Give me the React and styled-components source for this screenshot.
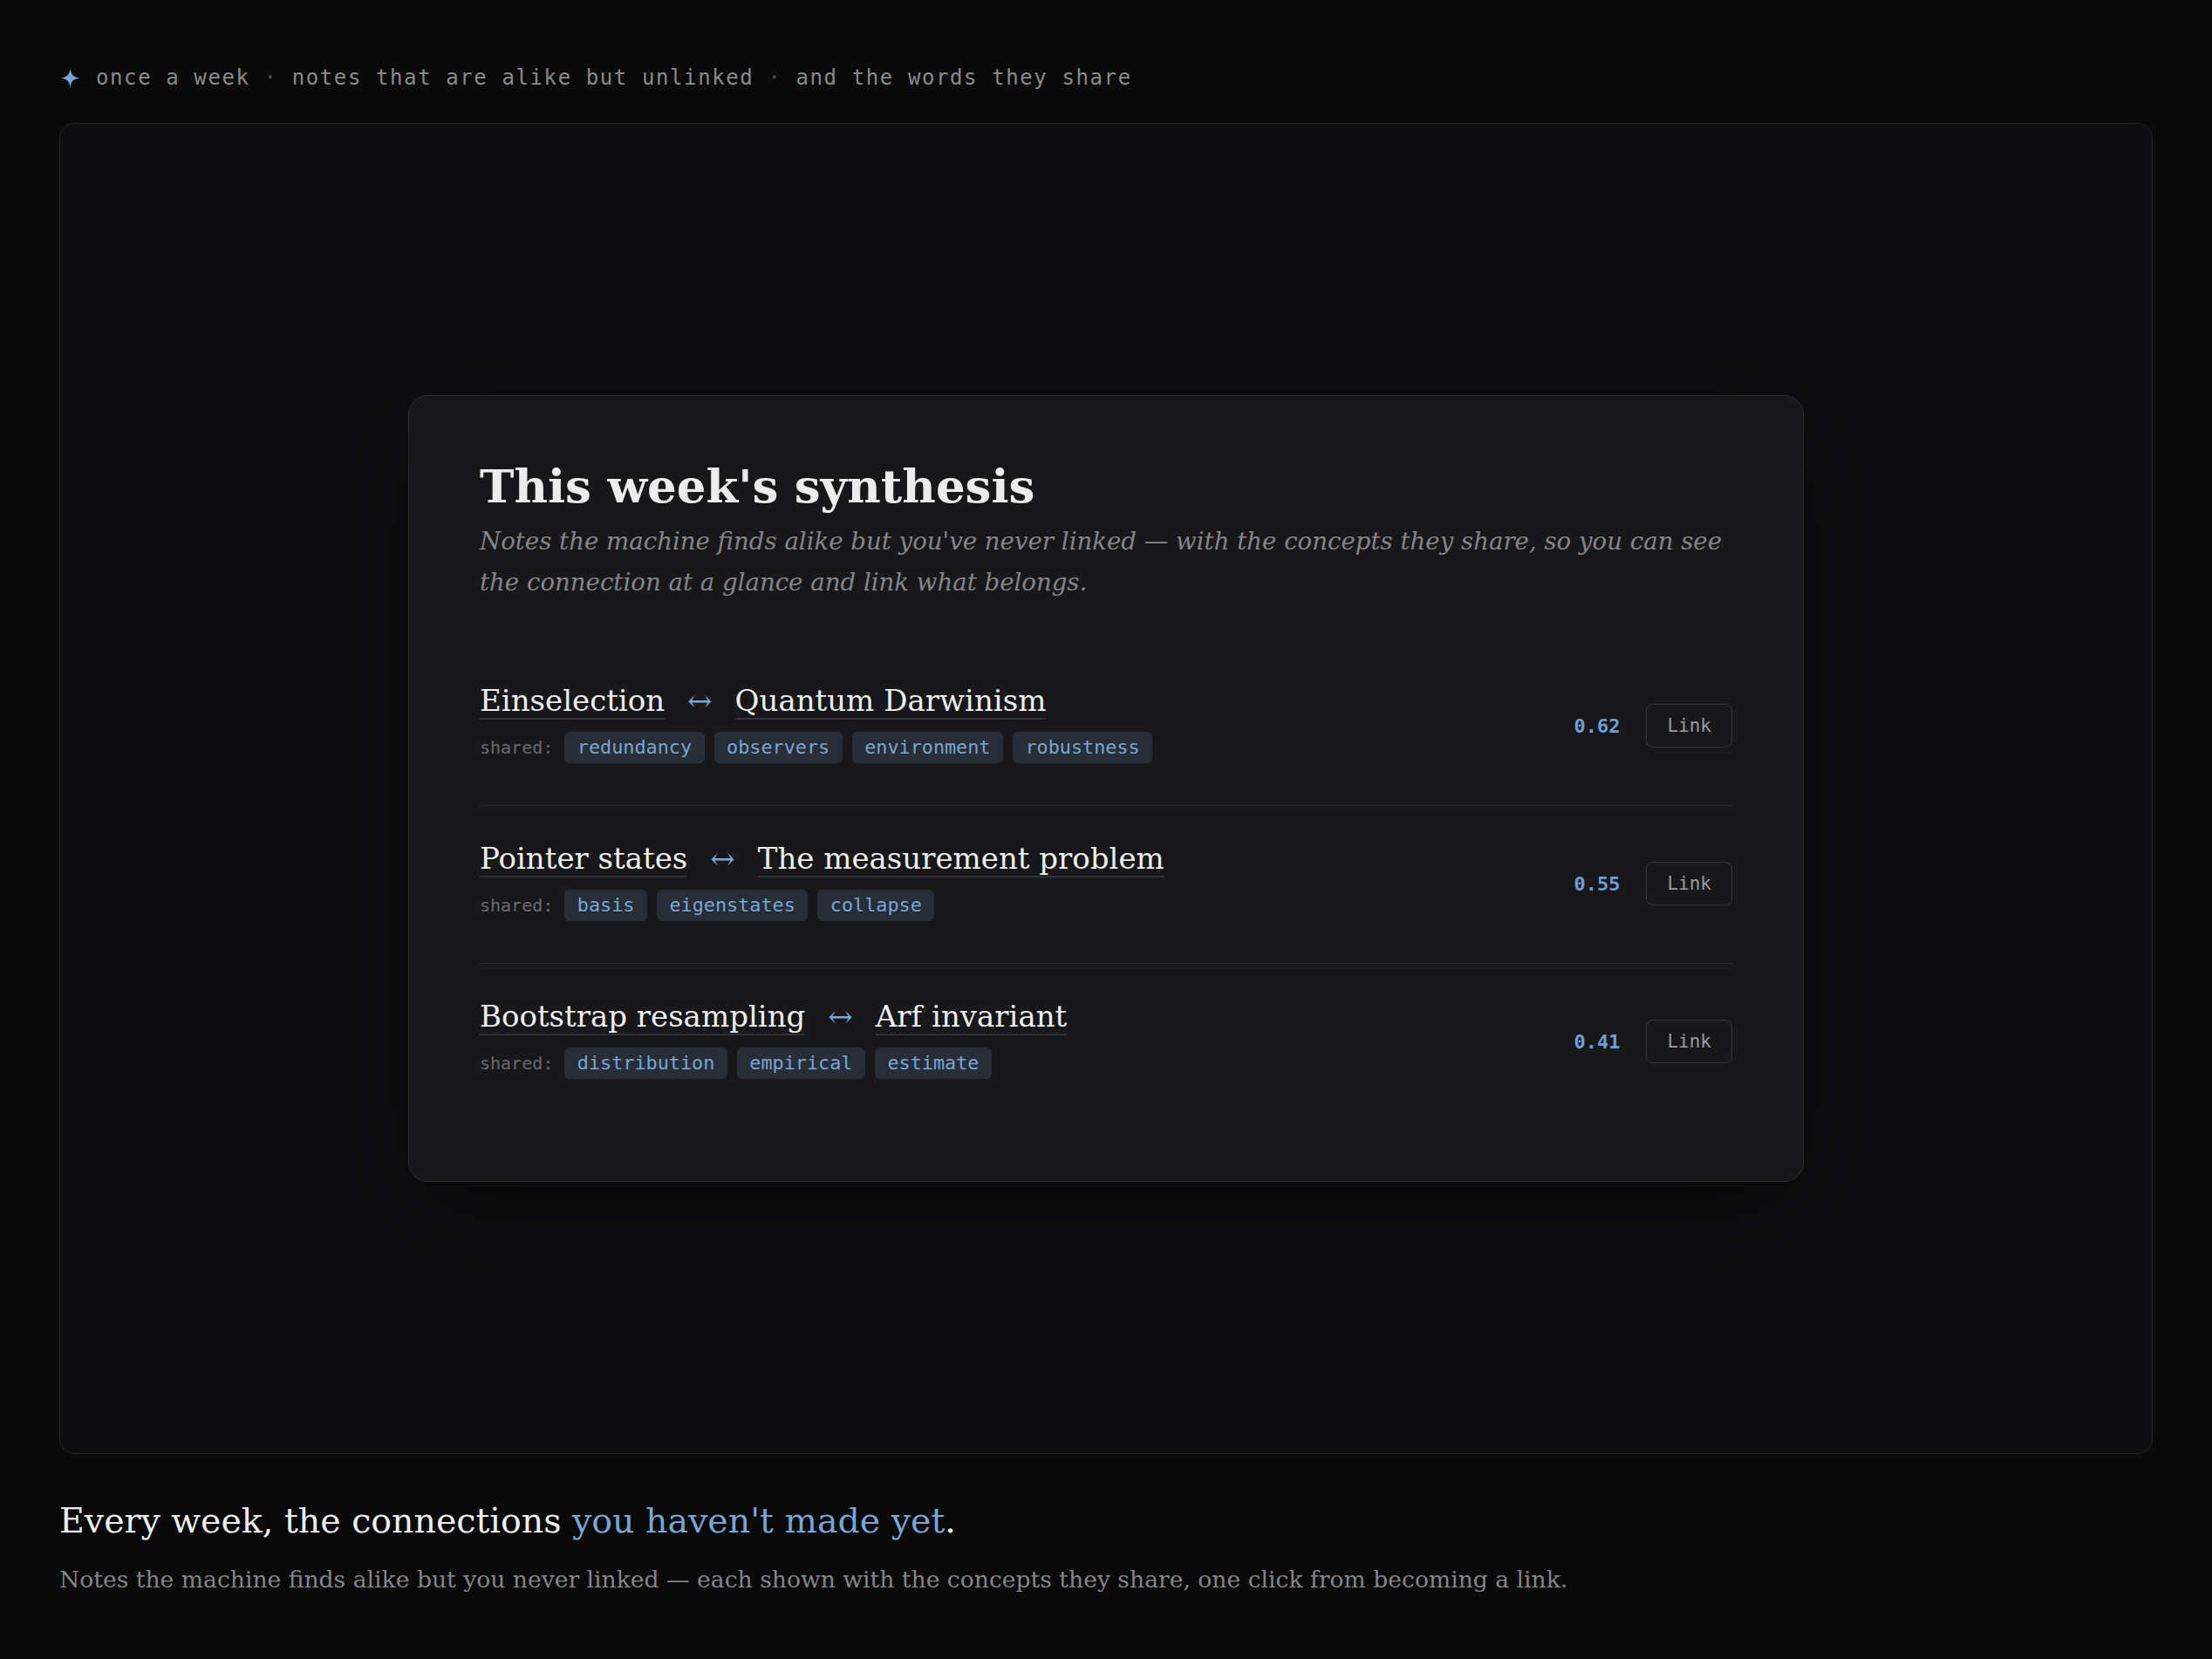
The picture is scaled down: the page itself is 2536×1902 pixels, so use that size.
import React from "react";
import styled, { createGlobalStyle } from "styled-components";

const serif = `"DejaVu Serif", Georgia, serif`;
const mono = `"DejaVu Sans Mono", Menlo, monospace`;
const accent = "#7aa5d3";

const GlobalStyle = createGlobalStyle`
  html, body {
    margin: 0;
    background: #0a0a0b;
  }
  body {
    color: #e6e6e6;
    font-family: ${serif};
  }
`;

const Page = styled.main`
  padding: 73px 68px 80px;
`;

const Caption = styled.div`
  display: flex;
  align-items: center;
  font-family: ${mono};
  font-size: 24px;
  line-height: 32px;
  letter-spacing: 1.6px;
  color: #8a8a8a;
`;

const Sparkle = styled.svg`
  width: 25px;
  height: 25px;
  margin: 0 17px 0 0;
  flex: none;
`;

const Dot = styled.span`
  color: #4e4e52;
`;

const Stage = styled.section`
  box-sizing: border-box;
  height: 1526px;
  margin-top: 36px;
  border: 1.5px solid #26262a;
  border-radius: 17px;
  background: #0f0f11;
  display: flex;
  align-items: center;
  justify-content: center;
`;

const Card = styled.article`
  box-sizing: border-box;
  width: 1600px;
  padding: 71px 81px 69px;
  border: 1.5px solid #2c2c30;
  border-radius: 22px;
  background: #18181a;
  box-shadow: 0 30px 120px rgba(0, 0, 0, 0.5);
`;

const Title = styled.h1`
  margin: 0;
  font-family: ${serif};
  font-weight: 700;
  font-size: 53px;
  line-height: 64px;
  color: #ececec;
`;

const Lede = styled.p`
  margin: 8px 0 0;
  font-family: ${serif};
  font-style: italic;
  font-size: 27.6px;
  line-height: 47px;
  color: #858589;
`;

const Pairs = styled.ul`
  list-style: none;
  margin: 52px 0 0;
  padding: 0;
`;

const Pair = styled.li`
  display: flex;
  align-items: center;
  padding: 36px 0 48px;
  border-bottom: 1px solid #29292d;

  &:last-child {
    border-bottom: none;
  }
`;

const PairBody = styled.div`
  flex: 1;
  display: flex;
  flex-direction: column;
  gap: 12px;
`;

const PairTitle = styled.div`
  font-family: ${serif};
  font-size: 34px;
  line-height: 48px;
  color: #eeeeee;
`;

const Note = styled.span`
  border-bottom: 2px solid #2f323a;
`;

const Arrow = styled.span`
  margin: 0 26px;
  color: ${accent};
`;

const Shared = styled.div`
  display: flex;
  align-items: center;
  gap: 11px;
`;

const SharedLabel = styled.span`
  font-family: ${mono};
  font-size: 20px;
  color: #6a6a6e;
  margin-right: 2px;
`;

const Chip = styled.span`
  font-family: ${mono};
  font-size: 21.8px;
  line-height: 28px;
  padding: 4px 14.5px;
  border-radius: 6px;
  background: #282e37;
  color: ${accent};
`;

const Actions = styled.div`
  display: flex;
  align-items: center;
  gap: 30px;
  margin-top: 10px;
`;

const Score = styled.span`
  font-family: ${mono};
  font-size: 22px;
  font-weight: 600;
  color: #6f9fd2;
`;

const LinkButton = styled.button`
  font-family: ${mono};
  font-size: 21px;
  line-height: 24px;
  padding: 12px 23px;
  border: 1.5px solid #35353a;
  border-radius: 8px;
  background: transparent;
  color: #9a9a9e;
  cursor: pointer;
`;

const Footer = styled.footer`
  margin-top: 50px;
`;

const Tagline = styled.h2`
  margin: 0;
  font-family: ${serif};
  font-weight: 400;
  font-size: 39.5px;
  line-height: 52px;
  color: #eeeeee;
`;

const Highlight = styled.span`
  color: ${accent};
`;

const Blurb = styled.p`
  margin: 22px 0 0;
  font-family: ${serif};
  font-size: 26.6px;
  line-height: 40px;
  color: #858589;
`;

const pairs = [
  { a: "Einselection", b: "Quantum Darwinism", shared: ["redundancy", "observers", "environment", "robustness"], score: 0.62 },
  { a: "Pointer states", b: "The measurement problem", shared: ["basis", "eigenstates", "collapse"], score: 0.55 },
  { a: "Bootstrap resampling", b: "Arf invariant", shared: ["distribution", "empirical", "estimate"], score: 0.41 },
];

const SparkleIcon = () => (
  <Sparkle viewBox="0 0 24 24" aria-hidden="true">
    <path d="M12 1.5 C13 8.5 15 10.8 22.5 12 C15 13.2 13 15.5 12 22.5 C11 15.5 9 13.2 1.5 12 C9 10.8 11 8.5 12 1.5 Z" fill={accent} />
  </Sparkle>
);

export default function App() {
  return (
    <>
      <GlobalStyle />
      <Page>
        <Caption>
          <SparkleIcon />
          <span>
            once a week <Dot>·</Dot> notes that are alike but unlinked <Dot>·</Dot> and the words they share
          </span>
        </Caption>

        <Stage>
          <Card>
            <Title>This week's synthesis</Title>
            <Lede>
              Notes the machine finds alike but you've never linked — with the concepts they share, so you can see
              the connection at a glance and link what belongs.
            </Lede>
            <Pairs>
              {pairs.map(p => (
                <Pair key={p.a}>
                  <PairBody>
                    <PairTitle>
                      <Note>{p.a}</Note>
                      <Arrow>↔</Arrow>
                      <Note>{p.b}</Note>
                    </PairTitle>
                    <Shared>
                      <SharedLabel>shared:</SharedLabel>
                      {p.shared.map(w => (
                        <Chip key={w}>{w}</Chip>
                      ))}
                    </Shared>
                  </PairBody>
                  <Actions>
                    <Score>{p.score.toFixed(2)}</Score>
                    <LinkButton>Link</LinkButton>
                  </Actions>
                </Pair>
              ))}
            </Pairs>
          </Card>
        </Stage>

        <Footer>
          <Tagline>
            Every week, the connections <Highlight>you haven't made yet</Highlight>.
          </Tagline>
          <Blurb>
            Notes the machine finds alike but you never linked — each shown with the concepts they share, one click from
            becoming a link.
          </Blurb>
        </Footer>
      </Page>
    </>
  );
}
